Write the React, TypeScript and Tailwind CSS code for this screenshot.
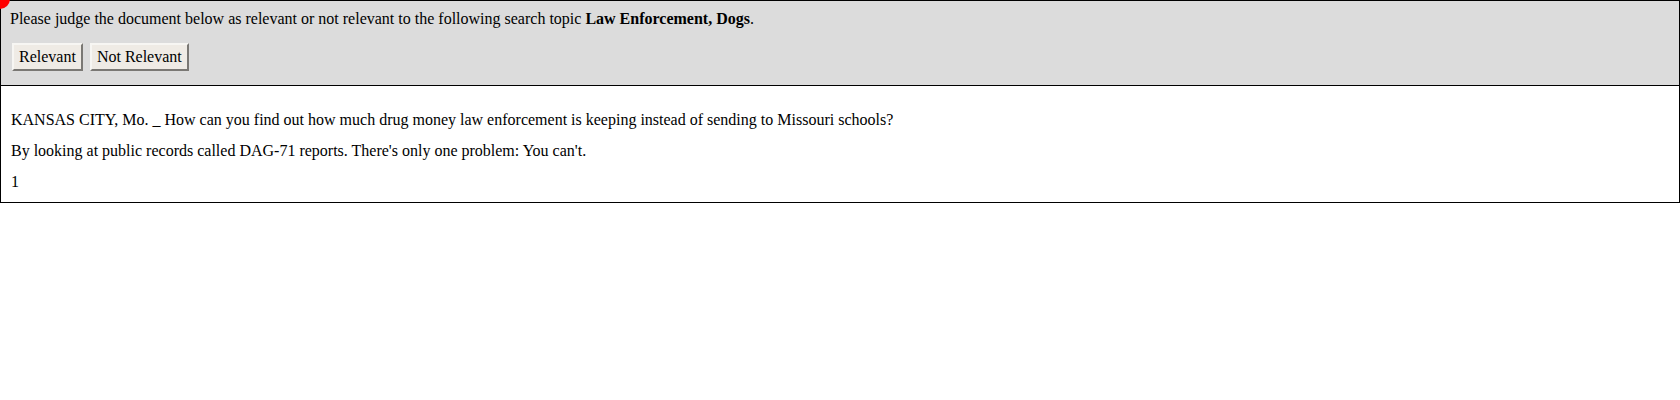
import React from "react";

const buttonClass =
  "border-2 border-t-[#f7f6f3] border-l-[#f7f6f3] border-b-[#7a7874] border-r-[#7a7874] bg-[#efebe5] px-[5px] py-[3px] text-[16px] leading-[18px] text-black";

export default function App() {
  return (
    <div className="relative overflow-hidden bg-white font-['Liberation_Serif',serif] text-[16px] text-black">
      <div className="pointer-events-none absolute -left-[10px] -top-[11px] z-10 h-5 w-5 rounded-full bg-[#ff0000]" />
      <div className="border border-black">
        <div className="border-b border-black bg-[#dcdcdc] px-[9px] pb-[14px] pt-[9px]">
          <p className="leading-[18px]">
            Please judge the document below as relevant or not relevant to the
            following search topic <b>Law Enforcement, Dogs</b>.
          </p>
          <div className="mt-[15px] flex gap-[7px] pl-[2px]">
            <button className={buttonClass}>Relevant</button>
            <button className={buttonClass}>Not Relevant</button>
          </div>
        </div>
        <div className="flex flex-col gap-[13px] px-[10px] pb-[11px] pt-[25px] leading-[18px]">
          <p>
            KANSAS CITY, Mo. _ How can you find out how much drug money law
            enforcement is keeping instead of sending to Missouri schools?
          </p>
          <p>
            By looking at public records called DAG-71 reports. There's only
            one problem: You can't.
          </p>
          <p>1</p>
        </div>
      </div>
    </div>
  );
}
